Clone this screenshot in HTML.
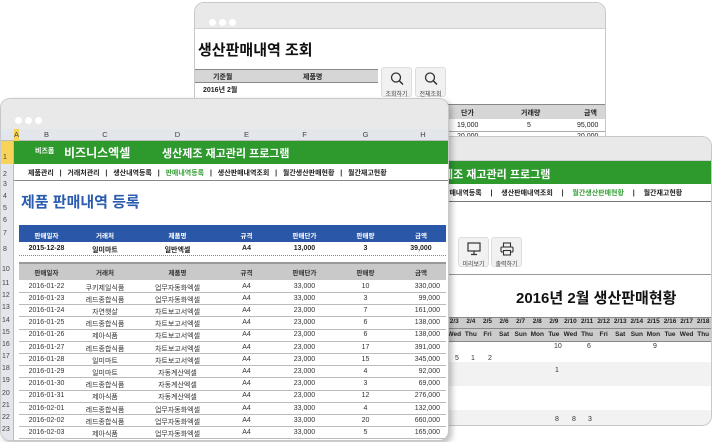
<!DOCTYPE html>
<html><head><meta charset="utf-8"><style>
*{margin:0;padding:0;box-sizing:border-box}
body{width:714px;height:442px;background:#fff;position:relative;overflow:hidden;font-family:"Liberation Sans","Noto Sans CJK KR",sans-serif;color:#222}
.win{position:absolute;background:#fff;border:1px solid #c8c8c8;border-radius:10px;overflow:hidden}
.tb{position:absolute;left:0;right:0;top:0;background:#e9e9e9;border-bottom:1px solid #cfcfcf}
.dots{position:absolute;left:14px;top:10px}
.dots i{display:inline-block;width:7px;height:7px;border-radius:50%;background:#fff;margin-right:3px}
.abs{position:absolute;white-space:nowrap}
.c{text-align:center}
.btn{position:absolute;width:31px;height:30px;background:#f1f1f1;border:1px solid #ddd;border-radius:3px;font-size:6px;text-align:center;color:#444}
</style></head><body>

<!-- back top window -->
<div class="win" style="left:194px;top:2px;width:412px;height:150px">
 <div class="tb" style="height:26px"><div class="dots"><i></i><i></i><i></i></div></div>
 <div class="abs" style="left:3px;top:36px;font-size:15px;font-weight:bold;color:#111">생산판매내역 조회</div>
 <div class="abs" style="left:0;top:66px;width:183px;height:14px;background:#d6d6d6;border-top:1px solid #888;border-bottom:1px solid #888;font-size:7px;font-weight:bold"><span class="abs" style="left:18px;top:2px">기준월</span><span class="abs" style="left:108px;top:2px">제품명</span></div>
 <div class="abs" style="left:8px;top:82px;font-size:7px;font-weight:bold">2016년 2월</div>
 <div class="abs" style="left:0;top:95px;width:183px;border-top:1px solid #999"></div>
 <div class="btn" style="left:186px;top:64px"><svg width="16" height="16" viewBox="0 0 16 16" style="margin-top:3px"><circle cx="7" cy="6.5" r="4.5" fill="none" stroke="#333" stroke-width="1.3"/><path d="M10.3 9.8L14 13.5" stroke="#333" stroke-width="1.5"/></svg><br>조회하기</div>
 <div class="btn" style="left:220px;top:64px"><svg width="16" height="16" viewBox="0 0 16 16" style="margin-top:3px"><circle cx="7" cy="6.5" r="4.5" fill="none" stroke="#333" stroke-width="1.3"/><path d="M10.3 9.8L14 13.5" stroke="#333" stroke-width="1.5"/></svg><br>전체조회</div>
 <div class="abs" style="left:252px;top:101px;width:160px;height:15px;background:#d6d6d6;border-top:1px solid #888;font-size:7px;font-weight:bold"><span class="abs" style="left:14px;top:3px">단가</span><span class="abs" style="left:74px;top:3px">거래량</span><span class="abs" style="left:137px;top:3px">금액</span></div>
 <div class="abs" style="left:252px;top:116px;width:160px;height:13px;font-size:7px;border-bottom:1px solid #aaa"><span class="abs" style="left:10px;top:3px">19,000</span><span class="abs" style="left:80px;top:3px">5</span><span class="abs" style="left:130px;top:3px">95,000</span></div>
 <div class="abs" style="left:252px;top:130px;width:160px;font-size:7px"><span class="abs" style="left:10px;top:0">20,000</span><span class="abs" style="left:130px;top:0">20,000</span></div>
</div>

<!-- right window -->
<div class="win" style="left:430px;top:136px;width:282px;height:290px">
 <div class="tb" style="height:24px"></div>
 <div class="abs" style="left:0;top:24px;width:282px;height:23px;background:#2e9a2e;color:#fff;font-size:11px;font-weight:bold;padding:5px 0 0 12px">제조 재고관리 프로그램</div>
 <div class="abs" style="left:0;top:47px;width:282px;height:18px;border-bottom:1px solid #777;font-size:7px;font-weight:bold;padding:4px 0 0 12px;word-spacing:1px">판매내역등록 &nbsp;&nbsp;| &nbsp;&nbsp;생산판매내역조회 &nbsp;&nbsp;| &nbsp;&nbsp;<span style="color:#3aa13a">월간생산판매현황</span> &nbsp;&nbsp;| &nbsp;&nbsp;월간재고현황</div>
 <div class="btn" style="left:27px;top:100px"><svg width="16" height="16" viewBox="0 0 16 16" style="margin-top:3px"><rect x="2" y="2" width="12" height="8" fill="none" stroke="#333" stroke-width="1.2"/><path d="M8 10v3M5 13.5h6" stroke="#333" stroke-width="1.2"/></svg><br>미리보기</div>
 <div class="btn" style="left:60px;top:100px"><svg width="16" height="16" viewBox="0 0 16 16" style="margin-top:3px"><rect x="4.5" y="2" width="7" height="4" fill="none" stroke="#333" stroke-width="1.1"/><rect x="2" y="6" width="12" height="5" rx="1" fill="none" stroke="#333" stroke-width="1.1"/><rect x="4.5" y="9.5" width="7" height="4.5" fill="#f1f1f1" stroke="#333" stroke-width="1.1"/></svg><br>출력하기</div>
 <div class="abs" style="left:0;top:137px;width:282px;border-top:1px solid #999"></div>
 <div class="abs" style="left:85px;top:150px;font-size:15px;font-weight:bold;color:#111">2016년 2월 생산판매현황</div>
 <div class="abs" style="left:14px;top:180px;font-size:6.5px;font-weight:bold;display:flex">
  <div style="display:flex;flex-direction:column">
   <div style="display:flex;background:#ccc;border:1px solid #888;height:12px">
   <span style="width:16.6px" class="c">2/3</span><span style="width:16.6px" class="c">2/4</span><span style="width:16.6px" class="c">2/5</span><span style="width:16.6px" class="c">2/6</span><span style="width:16.6px" class="c">2/7</span><span style="width:16.6px" class="c">2/8</span><span style="width:16.6px" class="c">2/9</span><span style="width:16.6px" class="c">2/10</span><span style="width:16.6px" class="c">2/11</span><span style="width:16.6px" class="c">2/12</span><span style="width:16.6px" class="c">2/13</span><span style="width:16.6px" class="c">2/14</span><span style="width:16.6px" class="c">2/15</span><span style="width:16.6px" class="c">2/16</span><span style="width:16.6px" class="c">2/17</span><span style="width:16.6px" class="c">2/18</span></div>
   <div style="display:flex;background:#ccc;border:1px solid #888;border-top:0;height:13px;padding-top:2px">
   <span style="width:16.6px" class="c">Wed</span><span style="width:16.6px" class="c">Thu</span><span style="width:16.6px" class="c">Fri</span><span style="width:16.6px" class="c">Sat</span><span style="width:16.6px" class="c">Sun</span><span style="width:16.6px" class="c">Mon</span><span style="width:16.6px" class="c">Tue</span><span style="width:16.6px" class="c">Wed</span><span style="width:16.6px" class="c">Thu</span><span style="width:16.6px" class="c">Fri</span><span style="width:16.6px" class="c">Sat</span><span style="width:16.6px" class="c">Sun</span><span style="width:16.6px" class="c">Mon</span><span style="width:16.6px" class="c">Tue</span><span style="width:16.6px" class="c">Wed</span><span style="width:16.6px" class="c">Thu</span></div>
  </div></div>
 <div class="abs" style="left:0;top:225px;width:282px;height:24px;background:#f2f2f2"></div>
 <div class="abs" style="left:0;top:273px;width:282px;height:17px;background:#f2f2f2"></div>
 <div style="font-size:7px;color:#333">
 <span class="abs" style="left:123px;top:206px">10</span><span class="abs" style="left:156px;top:206px">6</span><span class="abs" style="left:222px;top:206px">9</span>
 <span class="abs" style="left:24px;top:218px">5</span><span class="abs" style="left:40px;top:218px">1</span><span class="abs" style="left:57px;top:218px">2</span>
 <span class="abs" style="left:124px;top:230px">1</span>
 <span class="abs" style="left:124px;top:279px">8</span><span class="abs" style="left:141px;top:279px">8</span><span class="abs" style="left:157px;top:279px">3</span>
 </div>
</div>

<!-- front window -->
<div class="win" style="left:0;top:98px;width:449px;height:343px;box-shadow:3px 3px 6px rgba(0,0,0,.25)">
 <div class="tb" style="height:30px;border-bottom:0"><div class="dots" style="top:12px"><i></i><i></i><i></i></div></div>
 <div class="abs" style="left:0;top:30px;width:449px;height:12px;background:#e3e6ea;border-bottom:1px solid #bbb;font-size:7.5px;color:#444">
  <span class="abs" style="left:13px;top:0;width:5px;height:12px;background:#f7d35a"></span>
  <span class="abs" style="left:13px;top:1px">A</span>
  <span class="abs c" style="left:18px;width:55px;top:1px">B</span><span class="abs c" style="left:73px;width:62px;top:1px">C</span><span class="abs c" style="left:135px;width:83px;top:1px">D</span><span class="abs c" style="left:218px;width:55px;top:1px">E</span><span class="abs c" style="left:273px;width:61px;top:1px">F</span><span class="abs c" style="left:334px;width:61px;top:1px">G</span><span class="abs c" style="left:395px;width:54px;top:1px">H</span>
 </div>
 <div class="abs" style="left:0;top:42px;width:13px;height:301px;background:#e3e6ea;border-right:1px solid #bbb;font-size:7px;color:#444">
  <span class="abs" style="left:0;top:0;width:12px;height:23px;background:#f7d35a"></span>
  <span class="abs" style="left:2px;top:13px">1</span><span class="abs" style="left:2px;top:30px">2</span><span class="abs" style="left:2px;top:40px">3</span><span class="abs" style="left:2px;top:52px">4</span><span class="abs" style="left:2px;top:64px">5</span><span class="abs" style="left:2px;top:76px">6</span><span class="abs" style="left:2px;top:89px">7</span><span class="abs" style="left:2px;top:105px">8</span>
  <span class="abs" style="left:1px;top:125px">10</span><span class="abs" style="left:1px;top:139px">11</span><span class="abs" style="left:1px;top:151px">12</span><span class="abs" style="left:1px;top:163px">13</span><span class="abs" style="left:1px;top:176px">14</span><span class="abs" style="left:1px;top:188px">15</span><span class="abs" style="left:1px;top:200px">16</span><span class="abs" style="left:1px;top:212px">17</span><span class="abs" style="left:1px;top:224px">18</span><span class="abs" style="left:1px;top:236px">19</span><span class="abs" style="left:1px;top:249px">20</span><span class="abs" style="left:1px;top:261px">21</span><span class="abs" style="left:1px;top:273px">22</span><span class="abs" style="left:1px;top:285px">23</span>
 </div>
 <div class="abs" style="left:13px;top:42px;width:436px;height:23px;background:#2e9a2e;color:#fff;font-weight:bold">
  <span class="abs" style="left:21px;top:5px;font-size:7px">비즈폼</span>
  <span class="abs" style="left:50px;top:3px;font-size:12px">비즈니스엑셀</span>
  <span class="abs" style="left:148px;top:4px;font-size:11px">생산제조 재고관리 프로그램</span>
 </div>
 <div class="abs" style="left:13px;top:65px;width:436px;height:17px;border-bottom:1px solid #888;font-size:7px;font-weight:bold;color:#222">
  <span class="abs" style="left:14px;top:4px">제품관리 &nbsp;&nbsp;| &nbsp;&nbsp;거래처관리 &nbsp;&nbsp;| &nbsp;&nbsp;생산내역등록 &nbsp;&nbsp;| &nbsp;&nbsp;<span style="color:#3aa13a">판매내역등록</span> &nbsp;&nbsp;| &nbsp;&nbsp;생산판매내역조회 &nbsp;&nbsp;| &nbsp;&nbsp;월간생산판매현황 &nbsp;&nbsp;| &nbsp;&nbsp;월간재고현황</span>
 </div>
 <div class="abs" style="left:20px;top:92px;font-size:15px;font-weight:bold;color:#2a5db0">제품 판매내역 등록</div>
 <div class="abs" style="left:18px;top:126px;width:427px;height:17px;background:#2a57a8;color:#fff;font-size:6.5px;font-weight:bold"></div>
 <div class="abs" style="left:18px;top:143px;width:427px;height:14px;font-size:7px;font-weight:bold;border-bottom:1px dotted #888"></div>
 <div class="abs" style="left:18px;top:163px;width:427px;height:18px;background:#c9c9c9;border-top:2px solid #999"></div>
 <div id="rows"></div>
</div>
<script>
var cols=[[18,55],[73,62],[135,83],[218,55],[273,61],[334,61],[395,50]];
function row(top,vals,style,align){var h='';vals.forEach(function(v,i){var c=cols[i];var a=align&&i==6?'text-align:right;padding-right:6px':'text-align:center';h+='<span class="abs" style="left:'+c[0]+'px;width:'+c[1]+'px;top:'+top+'px;'+a+';'+style+'">'+v+'</span>'});return h}
var H='';
var hd=['판매일자','거래처','제품명','규격','판매단가','판매량','금액'];
H+=row(131,hd,'font-size:6.5px;font-weight:bold;color:#fff');
H+=row(146,['2015-12-28','일미마트','일반엑셀','A4','13,000','3','39,000'],'font-size:7px;font-weight:bold');
H+=row(168,hd,'font-size:6.5px;font-weight:bold;color:#333');
var d=[['2016-01-22','쿠키제일식품','업무자동화엑셀','33,000','10','330,000'],['2016-01-23','레드종합식품','업무자동화엑셀','33,000','3','99,000'],['2016-01-24','자연햇살','차트보고서엑셀','23,000','7','161,000'],['2016-01-25','레드종합식품','차트보고서엑셀','23,000','6','138,000'],['2016-01-26','제아식품','차트보고서엑셀','23,000','6','138,000'],['2016-01-27','레드종합식품','차트보고서엑셀','23,000','17','391,000'],['2016-01-28','일미마트','차트보고서엑셀','23,000','15','345,000'],['2016-01-29','일미마트','자동계산엑셀','23,000','4','92,000'],['2016-01-30','레드종합식품','자동계산엑셀','23,000','3','69,000'],['2016-01-31','제아식품','자동계산엑셀','23,000','12','276,000'],['2016-02-01','레드종합식품','업무자동화엑셀','33,000','4','132,000'],['2016-02-02','레드종합식품','업무자동화엑셀','33,000','20','660,000'],['2016-02-03','제아식품','업무자동화엑셀','33,000','5','165,000']];
d.forEach(function(r,i){var t=181+i*12.2;H+='<div class="abs" style="left:18px;width:427px;top:'+(t+12)+'px;border-top:1px solid #bbb"></div>';H+=row(t+2.5,[r[0],r[1],r[2],'A4',r[3],r[4],r[5]],'font-size:7px;color:#333',true)});
document.getElementById('rows').innerHTML=H;
</script>
</body></html>
